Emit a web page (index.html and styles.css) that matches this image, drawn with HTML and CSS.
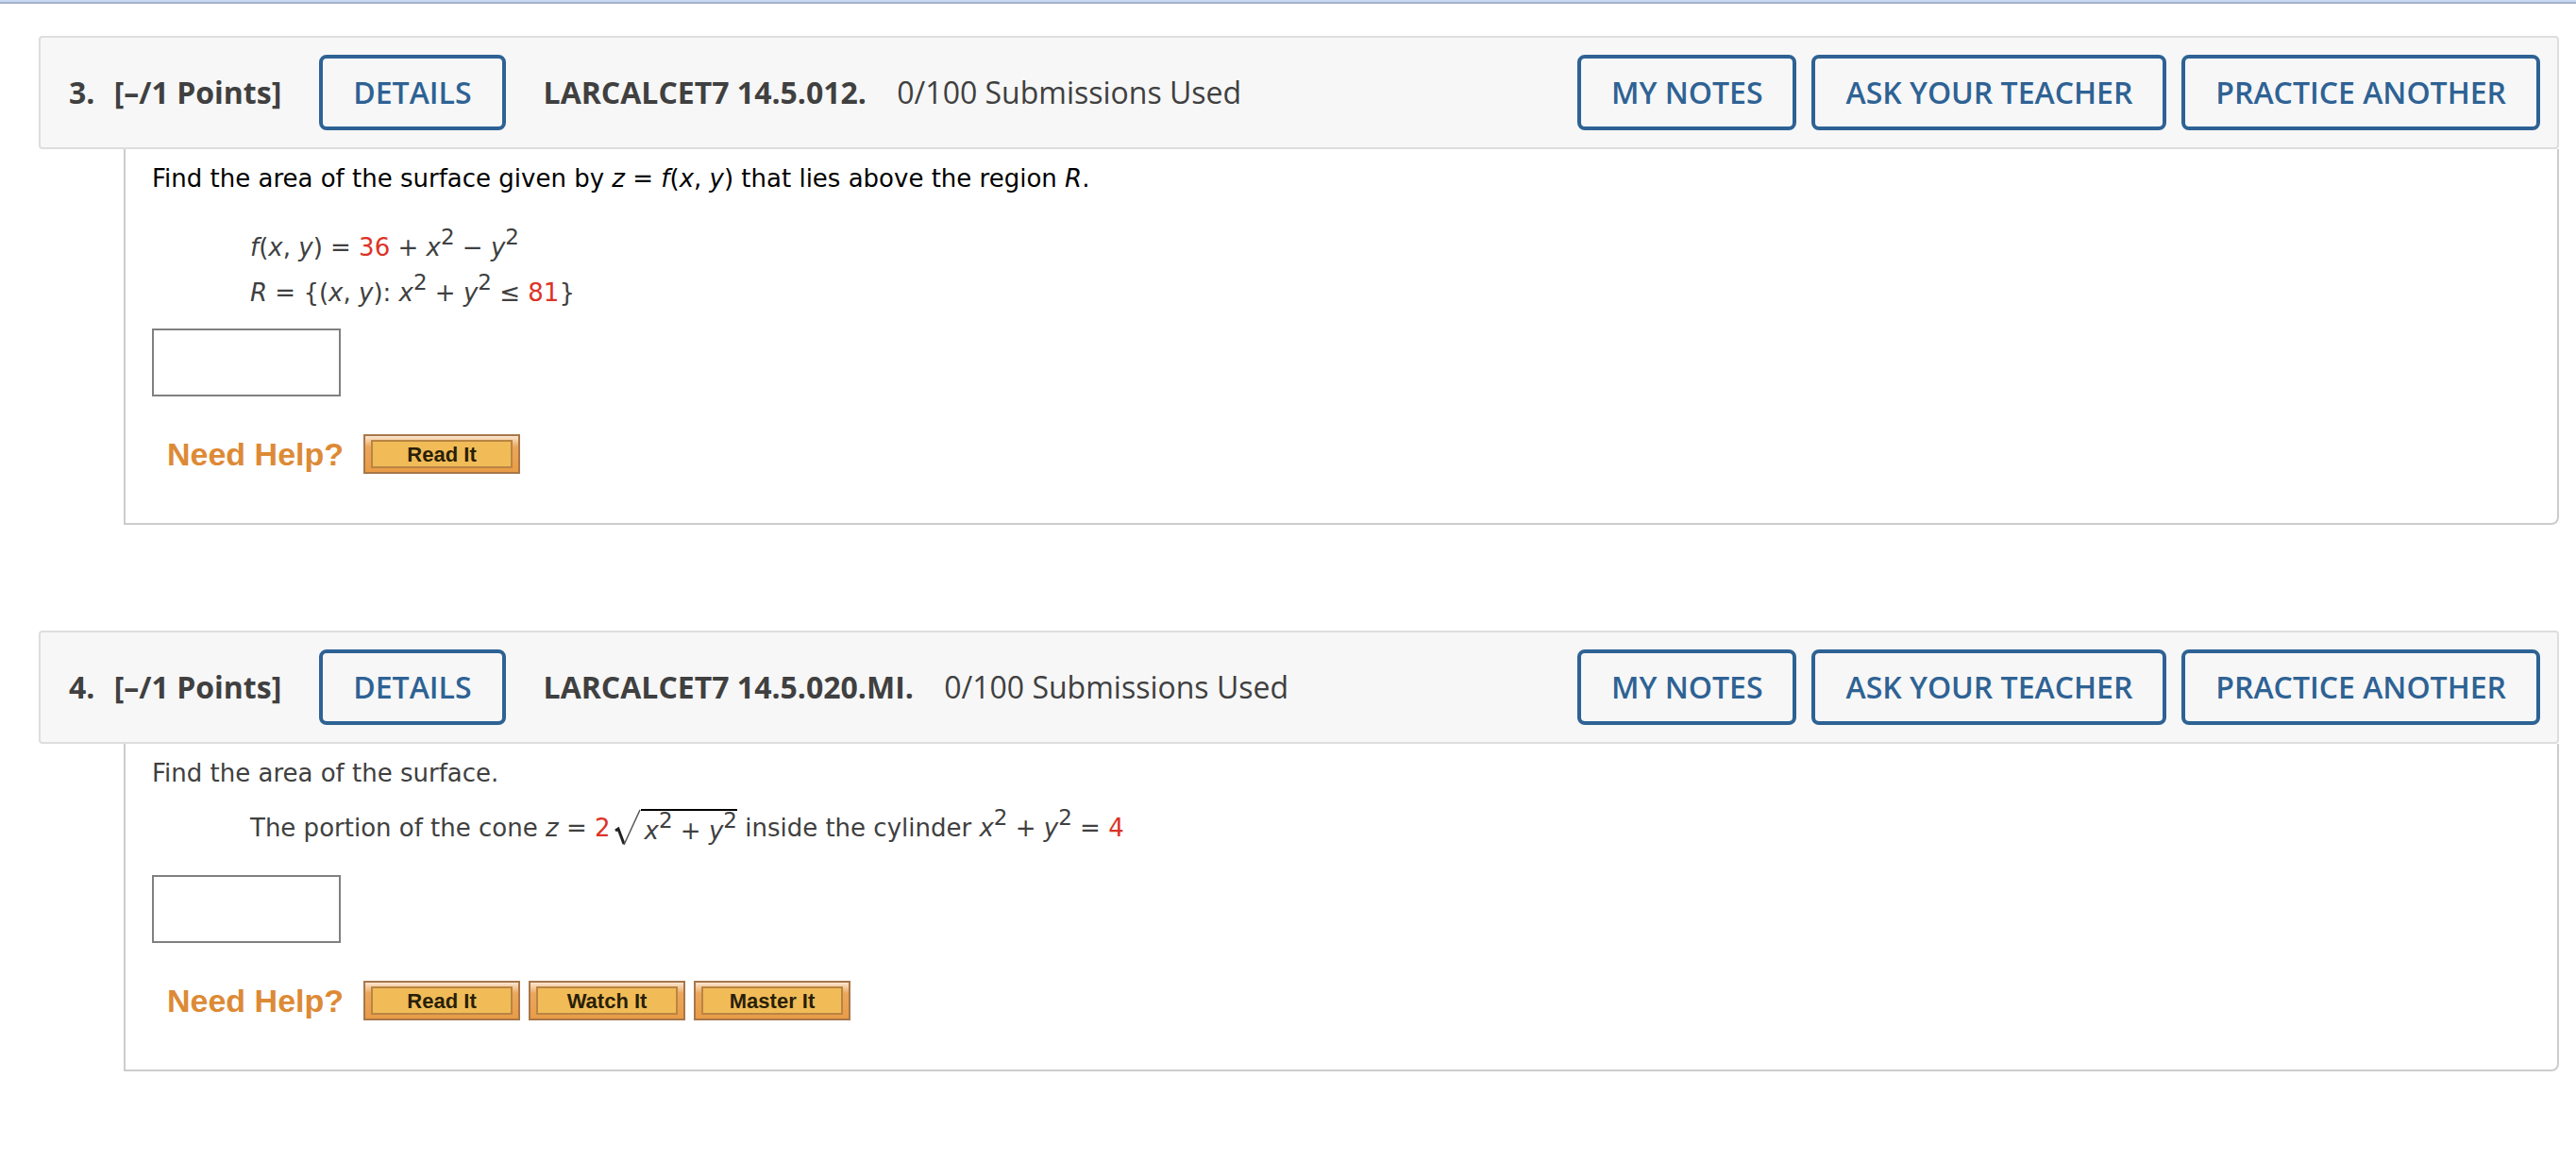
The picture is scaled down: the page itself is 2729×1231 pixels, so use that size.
FILE: index.html
```
<!DOCTYPE html>
<html lang="en">
<head>
    <meta charset="UTF-8">
    <meta name="viewport" content="width=device-width, initial-scale=1.0">
    <title>Assignment Questions</title>
    <link rel="stylesheet" href="styles.css">
</head>
<body>
    <main>
        <!-- Question 3 -->
        <section class="question">
            <header class="question-header">
                <h2 class="points"><span class="number">3.</span> [–/1 Points]</h2>
                <button type="button" class="btn">DETAILS</button>
                <p class="source"><strong>LARCALCET7 14.5.012.</strong> <span>0/100 Submissions Used</span></p>
                <div class="actions">
                    <button type="button" class="btn">MY NOTES</button>
                    <button type="button" class="btn">ASK YOUR TEACHER</button>
                    <button type="button" class="btn">PRACTICE ANOTHER</button>
                </div>
            </header>
            <div class="question-body">
                <p class="prompt dark">Find the area of the surface given by <i>z</i> = <i>f</i>(<i>x</i>, <i>y</i>) that lies above the region <i>R</i>.</p>
                <div class="math">
                    <p><i>f</i>(<i>x</i>, <i>y</i>) = <span class="red">36</span> + <i>x</i><sup>2</sup> − <i>y</i><sup>2</sup></p>
                    <p><i>R</i> = {(<i>x</i>, <i>y</i>): <i>x</i><sup>2</sup> + <i>y</i><sup>2</sup> ≤ <span class="red">81</span>}</p>
                </div>
                <input type="text" class="answer" aria-label="Answer to question 3">
                <div class="help">
                    <span class="help-label">Need Help?</span>
                    <button type="button" class="help-btn"><span>Read It</span></button>
                </div>
            </div>
        </section>

        <!-- Question 4 -->
        <section class="question">
            <header class="question-header">
                <h2 class="points"><span class="number">4.</span> [–/1 Points]</h2>
                <button type="button" class="btn">DETAILS</button>
                <p class="source"><strong>LARCALCET7 14.5.020.MI.</strong> <span>0/100 Submissions Used</span></p>
                <div class="actions">
                    <button type="button" class="btn">MY NOTES</button>
                    <button type="button" class="btn">ASK YOUR TEACHER</button>
                    <button type="button" class="btn">PRACTICE ANOTHER</button>
                </div>
            </header>
            <div class="question-body">
                <p class="prompt">Find the area of the surface.</p>
                <p class="math cone">The portion of the cone <i>z</i> = <span class="red">2</span><span class="root"><svg class="radical" viewBox="0 0 28 40" aria-hidden="true"><path d="M1 23 L4 21 L10 37" fill="none" stroke="#222" stroke-width="3"/><path d="M10 38 L27 1" fill="none" stroke="#555" stroke-width="1.5"/></svg><span class="radicand"><i>x</i><sup>2</sup> + <i>y</i><sup>2</sup></span></span> inside the cylinder <i>x</i><sup>2</sup> + <i>y</i><sup>2</sup> = <span class="red">4</span></p>
                <input type="text" class="answer" aria-label="Answer to question 4">
                <div class="help">
                    <span class="help-label">Need Help?</span>
                    <button type="button" class="help-btn"><span>Read It</span></button>
                    <button type="button" class="help-btn"><span>Watch It</span></button>
                    <button type="button" class="help-btn"><span>Master It</span></button>
                </div>
            </div>
        </section>
    </main>
</body>
</html>
```
FILE: styles.css
```
/* Global Styles */
* {
    margin: 0;
    padding: 0;
    box-sizing: border-box;
}

body {
    background-color: #fff;
    color: #404040;
    font-family: Verdana, "DejaVu Sans", sans-serif;
    font-size: 26px;
    line-height: 48px;
    border-top: 2px solid #c9d9f5;
}

main {
    border-top: 2px solid #a3b1c9;
    padding: 34px 18px 0 41px;
}

.question {
    margin-bottom: 112px;
}

/* The last question leaves less room under it */
.question:last-child {
    margin-bottom: 40px;
}

/* Question Header */
.question-header {
    display: flex;
    align-items: center;
    background-color: #f7f7f7;
    border: 2px solid #dedede;
    border-radius: 4px;
    padding: 18px 18px 18px 30px;
    font-family: "Open Sans", sans-serif;
    font-size: 32px;
    line-height: 44px;
}

.points {
    font-size: 32px;
    font-weight: 700;
    margin-right: 40px;
}

.number {
    margin-right: 12px;
}

.source {
    margin-left: 40px;
}

.source strong {
    margin-right: 24px;
}

.actions {
    display: flex;
    gap: 16px;
    margin-left: auto;
}

.btn {
    background-color: transparent;
    border: 4px solid #2e6294;
    border-radius: 8px;
    color: #2e6294;
    font-family: inherit;
    font-size: 32px;
    font-weight: 600;
    line-height: 44px;
    padding: 14px 32px;
    cursor: pointer;
}

/* Question Body */
.question-body {
    border: 2px solid #ccc;
    border-top: none;
    border-bottom-right-radius: 8px;
    margin-left: 90px;
    padding: 7px 28px 52px;
}

.prompt.dark {
    color: #000;
}

.math {
    margin: 25px 0 14px 104px;
}

.math.cone {
    margin: 10px 0 26px 104px;
}

.red {
    color: #dc3327;
}

sup {
    font-size: 23px;
    line-height: 0;
    vertical-align: 12px;
}

/* Square root */
.root {
    display: inline-flex;
    vertical-align: middle;
    line-height: 42px;
    margin-left: 4px;
}

.radical {
    width: 28px;
    height: 40px;
}

.radicand {
    border-top: 2px solid #000;
    padding-left: 4px;
}

.answer {
    display: block;
    width: 200px;
    height: 72px;
    border: 2px solid #808080;
    padding: 0 8px;
    font: inherit;
}

/* Need Help */
.help {
    display: flex;
    align-items: center;
    gap: 9px;
    margin: 40px 0 0 16px;
    font-family: Arial, "Liberation Sans", sans-serif;
    font-weight: bold;
}

.help-label {
    color: #dd8a36;
    font-size: 34px;
    line-height: 42px;
    margin-right: 12px;
}

.help-btn {
    width: 166px;
    height: 42px;
    border: 2px solid #a8774a;
    background: linear-gradient(#fbe6d2, #eba75c 30%, #e99c47);
    padding: 4px 6px;
    cursor: pointer;
}

.help-btn span {
    display: block;
    border: 2px solid #b98543;
    background-color: #f1bc58;
    color: #2a1f08;
    font-family: Arial, "Liberation Sans", sans-serif;
    font-size: 22px;
    font-weight: bold;
    line-height: 24px;
    padding-top: 2px;
}
```
